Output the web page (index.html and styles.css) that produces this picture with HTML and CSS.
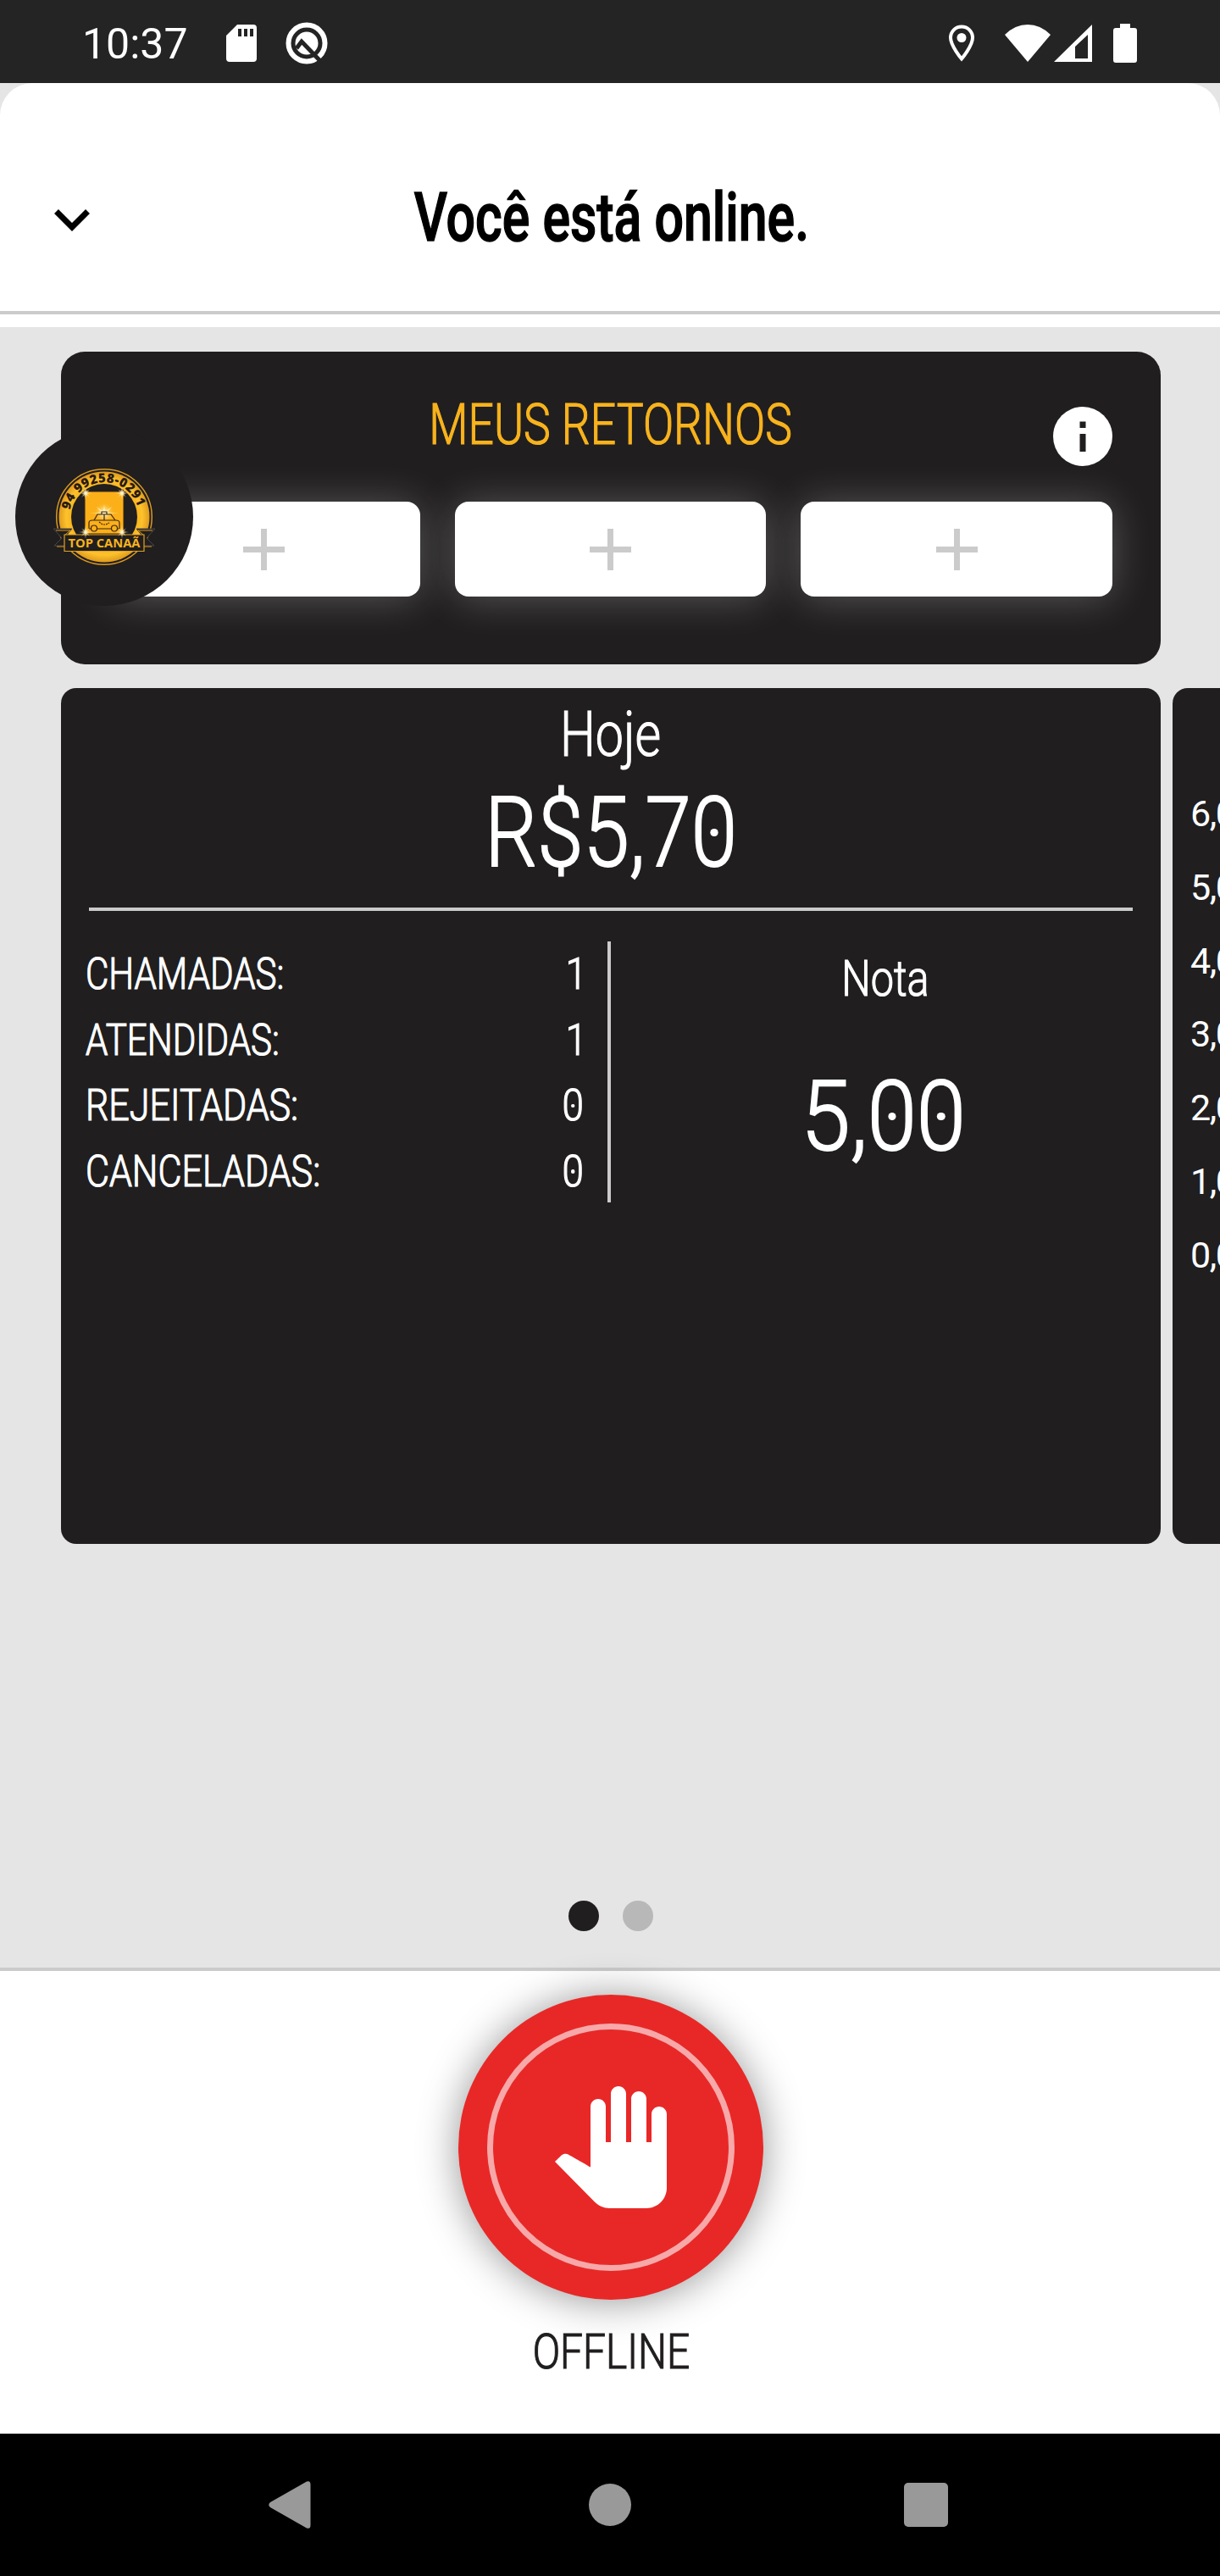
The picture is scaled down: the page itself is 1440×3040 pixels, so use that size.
FILE: index.html
```html
<!DOCTYPE html>
<html lang="pt-BR">
<head>
    <meta charset="UTF-8">
    <meta name="viewport" content="width=device-width, initial-scale=1.0">
    <title>Top Canaã - Motorista</title>
    <link rel="stylesheet" href="styles.css">
</head>
<body>

    <!-- Barra de status -->
    <div class="status-bar">
        <span class="clock">10:37</span>
        <svg class="icon-sd" width="36" height="44" viewBox="0 0 36 44">
            <path fill="#fff" fill-rule="evenodd" d="M13 0h19a4 4 0 0 1 4 4v36a4 4 0 0 1-4 4H4a4 4 0 0 1-4-4V13zM14 5v9h4V5zm7 0v9h4V5zm7 0v9h4V5z"/>
        </svg>
        <svg class="icon-q" width="50" height="50" viewBox="0 0 50 50">
            <circle cx="25" cy="25" r="21.5" fill="none" stroke="#fff" stroke-width="6"/>
            <circle cx="25" cy="25" r="13.5" fill="#fff"/>
            <path d="M13 31l6-8 24 25" fill="none" stroke="#242424" stroke-width="5"/>
        </svg>
        <div class="status-right">
            <svg class="icon-pin" width="32" height="44" viewBox="0 0 32 44">
                <path d="M16 2.5C8.500 2.500 3 8.500 3 15.500 3 25 16 40.500 16 40.500S29 25 29 15.500C29 8.500 23.500 2.500 16 2.500z" fill="none" stroke="#fff" stroke-width="4"/>
                <circle cx="16" cy="15.500" r="5.500" fill="#fff"/>
            </svg>
            <svg class="icon-wifi" width="54" height="44" viewBox="0 0 54 44">
                <path fill="#fff" d="M0 12Q12 0 27 0T54 12L27 44z"/>
            </svg>
            <svg class="icon-signal" width="45" height="44" viewBox="0 0 45 44">
                <path fill="#fff" fill-rule="evenodd" d="M45 0v44H0zM40 12L25 26v14h15z"/>
            </svg>
            <svg class="icon-battery" width="28" height="46" viewBox="0 0 28 46">
                <path fill="#fff" d="M8 0h12v5h5a3 3 0 0 1 3 3v35a3 3 0 0 1-3 3H3a3 3 0 0 1-3-3V8a3 3 0 0 1 3-3h5z"/>
            </svg>
        </div>
    </div>

    <header class="header">
        <svg class="chevron" width="42" height="26" viewBox="0 0 42 26">
            <path d="M2.500 2.500L21 21 39.500 2.500" fill="none" stroke="#000" stroke-width="7"/>
        </svg>
        <h1><span class="title">Você está online.</span></h1>
    </header>

    <main class="content">

        <!-- Retornos -->
        <section class="returns">
            <div class="returns-title"><span>MEUS RETORNOS</span></div>
            <svg class="info" width="70" height="70" viewBox="0 0 70 70">
                <circle cx="35" cy="35" r="35" fill="#fff"/>
                <path fill="#201e1f" d="M31.500 17.500h7V25h-7zM31.500 32h7v21h-7z"/>
            </svg>
            <div class="slots">
                <div class="slot"><i class="plus"></i></div>
                <div class="slot"><i class="plus"></i></div>
                <div class="slot"><i class="plus"></i></div>
            </div>
        </section>

        <!-- Botão flutuante com a logo -->
        <div class="float-logo">
            <svg width="210" height="210" viewBox="0 0 210 210">
                <defs>
                    <radialGradient id="gold">
                        <stop offset="0.65" stop-color="#f9ae17"/>
                        <stop offset="0.84" stop-color="#fcc22c"/>
                        <stop offset="1" stop-color="#e09a1c"/>
                    </radialGradient>
                    <radialGradient id="glow">
                        <stop offset="0" stop-color="#fff"/>
                        <stop offset="0.25" stop-color="#fff3c0" stop-opacity="0.8"/>
                        <stop offset="1" stop-color="#fbb81b" stop-opacity="0"/>
                    </radialGradient>
                    <path id="arc" d="M64.400 97a41.500 41.500 0 0 1 81.200 0"/>
                    <g id="spark">
                        <circle r="5" fill="url(#glow)"/>
                        <path fill="#fff6d5" d="M0-8L.6-.6 8 0 .6.6 0 8-.6.6-8 0-.6-.6zM-5-5L0-.5 5-5 .5 0 5 5 0 .5-5 5-.5 0z"/>
                    </g>
                </defs>
                <circle cx="105" cy="105" r="56.300" fill="#201e1f" stroke="#d99a20" stroke-width="1.500"/>
                <circle cx="105" cy="105" r="53.500" fill="url(#gold)"/>
                <circle cx="105" cy="105" r="39" fill="#201e1f"/>
                <text class="logo-phone"><textPath href="#arc" textLength="109" startOffset="0">94 99258-0291</textPath></text>
                <rect x="82" y="75" width="46" height="50" fill="#fbb01a" stroke="#3a2513"/>
                <!-- Taxi -->
                <circle cx="105" cy="100" r="12" fill="url(#glow)"/>
                <path fill="#fff2b8" d="M105 90l1 9 8-6-6 7 14 1H88l14-1-6-7 8 6z"/>
                <g fill="none" stroke="#3a2513" stroke-width="1.200">
                    <path d="M89.500 119H88q-1 0-1-1v-6q0-3 4-3h28q4 0 4 3v6q0 1-1 1h-1.500M113.500 119h-17M93 109l4-7h16l5 7M102 102v-3h6v3M105 102v7"/>
                    <circle cx="93" cy="118.500" r="3.500"/>
                    <circle cx="117" cy="118.500" r="3.500"/>
                    <path d="M99 111l4 3h4l4-2" stroke-dasharray="2 1"/>
                </g>
                <!-- Faixa -->
                <path fill="#201e1f" stroke="#4b4544" d="M45 119h22l-5 6v14H46l9-9z"/>
                <path fill="#201e1f" stroke="#4b4544" d="M165 119h-22l5 6v14h16l-9-9z"/>
                <path fill="none" stroke="#d99a20" d="M48 121h17l-6 5M162 121h-17l6 5M49 140h9M161 140h-9"/>
                <path fill="#201e1f" stroke="#e3a11d" stroke-width="1.200" d="M58 126h94v19.500H58z"/>
                <text class="logo-name" x="62.500" y="140.500" textLength="85" lengthAdjust="spacingAndGlyphs">TOP CANAÃ</text>
                <use href="#spark" x="83" y="77"/>
                <use href="#spark" x="126" y="77"/>
                <use href="#spark" x="83" y="123"/>
                <use href="#spark" x="126" y="123"/>
            </svg>
        </div>

        <!-- Carrossel -->
        <div class="carousel">
            <section class="card today">
                <div class="today-label"><span>Hoje</span></div>
                <div class="today-value"><span>R$5,7<b class="zero">0</b></span></div>
                <div class="today-body">
                    <ul class="stats">
                        <li><span class="name">CHAMADAS:</span><span class="num one">1</span></li>
                        <li><span class="name">ATENDIDAS:</span><span class="num one">1</span></li>
                        <li><span class="name wide">REJEITADAS:</span><span class="num"><b class="zero">0</b></span></li>
                        <li><span class="name wide">CANCELADAS:</span><span class="num"><b class="zero">0</b></span></li>
                    </ul>
                    <div class="rating">
                        <div class="rating-label"><span>Nota</span></div>
                        <div class="rating-value"><span>5,<b class="zero">0</b><b class="zero">0</b></span></div>
                    </div>
                </div>
            </section>
            <section class="card chart">
                <div>6,00</div>
                <div>5,00</div>
                <div>4,00</div>
                <div>3,00</div>
                <div>2,00</div>
                <div>1,00</div>
                <div>0,00</div>
            </section>
        </div>

        <div class="dots">
            <i class="dot active"></i>
            <i class="dot"></i>
        </div>
    </main>

    <footer class="footer">
        <button class="offline-btn">
            <span class="ring">
                <svg width="144" height="144" viewBox="0 0 24 24">
                    <path fill="#fff" d="M23 5.500V20c0 2.200-1.800 4-4 4h-7.300c-1.080 0-2.100-.43-2.850-1.190L1 14.830s1.260-1.230 1.300-1.250c.22-.19.490-.29.790-.29.220 0 .420.060.600.160.040.010 4.310 2.460 4.310 2.460V4c0-.83.670-1.500 1.500-1.500S11 3.170 11 4v7h1V1.500c0-.83.670-1.500 1.500-1.500S15 .670 15 1.500V11h1V2.500c0-.83.670-1.500 1.500-1.500s1.500.670 1.500 1.500V11h1V5.500c0-.83.670-1.500 1.500-1.500s1.500.670 1.500 1.500z"/>
                </svg>
            </span>
        </button>
        <div class="offline-label"><span>OFFLINE</span></div>
    </footer>

    <!-- Navegação do Android -->
    <nav class="nav-bar">
        <svg width="50" height="56" viewBox="0 0 50 56">
            <path fill="#999" d="M45 .5q4.500-1.500 4.500 3.500v48q0 5-4.500 3.500L2 31q-3.500-3 0-6z"/>
        </svg>
        <i class="nav-home"></i>
        <i class="nav-recent"></i>
    </nav>

</body>
</html>
```
FILE: styles.css
```css
* {
    box-sizing: border-box;
}

body {
    margin: 0;
    width: 1440px;
    height: 3040px;
    display: flex;
    flex-direction: column;
    overflow: hidden;
    background-color: #e5e5e5;
    font-family: Roboto, "Liberation Sans", sans-serif;
    color: #fff;
}

svg {
    display: block;
    flex: none;
}

/* Barra de status */
.status-bar {
    height: 98px;
    padding: 4px 98px 0 97px;
    display: flex;
    align-items: center;
    background-color: #242424;
}

.clock {
    width: 170px;
    font-size: 50px;
    line-height: 60px;
    padding-top: 2px;
}

.icon-q {
    margin-left: 34px;
}

.status-right {
    margin-left: auto;
    display: flex;
    align-items: center;
}

.icon-wifi {
    margin-left: 35px;
}

.icon-signal {
    margin-left: 4px;
}

.icon-battery {
    margin-left: 25px;
}

/* Cabeçalho */
.header {
    height: 288px;
    padding: 17px 64px 0;
    display: grid;
    grid-template-columns: 42px 1fr 42px;
    align-items: center;
    background: linear-gradient(#cbcbcb, #cbcbcb) 0 269px / 100% 4px no-repeat #fff;
    border-radius: 38px 38px 0 0;
}

.chevron {
    margin-top: 18px;
}

h1 {
    margin: 0;
    padding-top: 12px;
    text-align: center;
    color: #000;
    font-size: 80px;
    font-weight: 500;
    line-height: 80px;
    -webkit-text-stroke: 1.500px #000;
}

/* A fonte fica mais estreita com scaleX */
.title,
.returns-title span,
.today-label span,
.today-value span,
.rating-label span,
.rating-value span,
.offline-label span {
    display: inline-block;
    white-space: nowrap;
}

.title {
    transform: translateX(2px) scaleX(0.76);
}

.content {
    position: relative;
    height: 1936px;
    padding: 29px 70px 0 72px;
    flex: none;
}

/* Retornos */
.returns {
    position: relative;
    height: 369px;
    padding: 46px 57px 0 56px;
    background-color: #201e1f;
    border-radius: 28px;
}

.returns-title {
    height: 80px;
    margin-bottom: 51px;
    padding-top: 1px;
    text-align: center;
    color: #f8b31d;
    font-size: 66px;
    font-weight: 300;
    line-height: 80px;
    -webkit-text-stroke: 1.200px #f8b31d;
}

.returns-title span {
    transform: scaleX(0.81);
}

.info {
    position: absolute;
    top: 65px;
    right: 57px;
}

.slots {
    display: grid;
    grid-template-columns: repeat(3, 1fr);
    gap: 41px;
}

.slot {
    height: 112px;
    display: flex;
    align-items: center;
    justify-content: center;
    background-color: #fff;
    border-radius: 16px;
    box-shadow: 0 2px 48px rgba(255, 255, 255, 0.26);
}

.plus {
    width: 49px;
    height: 49px;
    background: linear-gradient(#cbcbcb, #cbcbcb) center / 49px 7px no-repeat,
                linear-gradient(#cbcbcb, #cbcbcb) center / 7px 49px no-repeat;
}

.float-logo {
    position: absolute;
    left: 18px;
    top: 119px;
    width: 210px;
    height: 210px;
    background-color: #201e1f;
    border-radius: 50%;
}

.logo-phone {
    font-family: "Open Sans", sans-serif;
    font-size: 15px;
    font-weight: 800;
    fill: #2a1a12;
}

.logo-name {
    font-family: "Open Sans", sans-serif;
    font-size: 15px;
    font-weight: 700;
    fill: #f8b31d;
}

/* Carrossel */
.carousel {
    width: 1368px;
    margin-top: 28px;
    display: flex;
    gap: 14px;
    overflow: hidden;
}

.card {
    height: 1010px;
    flex: none;
    background-color: #201e1f;
    border-radius: 18px;
}

.today {
    width: 1298px;
    padding: 14px 33px 0;
    font-weight: 300;
    -webkit-text-stroke: 1.200px #fff;
}

.today-label {
    height: 82px;
    text-align: center;
    font-size: 74px;
    line-height: 82px;
}

.today-label span {
    transform: scaleX(0.8);
}

.today-value {
    height: 167px;
    padding-top: 5px;
    border-bottom: 4px solid #cbcbcb;
    text-align: center;
    font-size: 115px;
    line-height: 140px;
    -webkit-text-stroke-width: 2px;
}

.today-value span {
    transform: scaleX(0.85);
}

.today-body {
    height: 308px;
    margin-top: 36px;
    display: flex;
}

.stats {
    width: 616px;
    margin: 0;
    padding: 0 28px 0 0;
    list-style: none;
    border-right: 4px solid #cbcbcb;
}

.stats li {
    height: 77.700px;
    display: flex;
    justify-content: space-between;
    font-size: 52px;
    line-height: 78px;
}

.stats .name {
    transform: scaleX(0.81);
    transform-origin: left;
    margin-left: -4px;
}

.stats .name.wide {
    transform: scaleX(0.828);
}

.stats .num {
    transform: scaleX(0.88);
    transform-origin: right;
}

.stats .one {
    margin-right: -4px;
}

/* Zero com ponto no meio */
.zero {
    position: relative;
    font-weight: inherit;
}

.zero::after {
    content: "";
    position: absolute;
    left: 50%;
    top: 50%;
    width: 0.09em;
    height: 0.08em;
    margin: -0.04em 0 0 -0.045em;
    background-color: #fff;
    border-radius: 50%;
}

.rating {
    flex: 1;
    padding: 8px 0 0 31px;
    text-align: center;
}

.rating-label {
    height: 72px;
    font-size: 60px;
    line-height: 72px;
}

.rating-label span {
    transform: scaleX(0.81);
}

.rating-value {
    margin-top: 57px;
    font-size: 115px;
    line-height: 140px;
    -webkit-text-stroke-width: 2px;
}

.rating-value span {
    transform: translateX(-2px) scaleX(0.91);
}

.chart {
    width: 1298px;
    padding: 105px 21px 0;
    font-size: 43px;
    line-height: 86.800px;
    letter-spacing: -1.500px;
}

.dots {
    position: absolute;
    left: 671px;
    bottom: 43px;
    display: flex;
    gap: 28px;
}

.dot {
    width: 36px;
    height: 36px;
    background-color: #b8b8b8;
    border-radius: 50%;
}

.dot.active {
    background-color: #201e1f;
}

/* Rodapé */
.footer {
    position: relative;
    height: 550px;
    padding: 28px 0 0 2px;
    display: flex;
    flex-direction: column;
    align-items: center;
    border-top: 4px solid #cbcbcb;
    background-color: #fff;
}

.offline-btn {
    width: 360px;
    height: 360px;
    padding: 0;
    display: flex;
    align-items: center;
    justify-content: center;
    border: none;
    border-radius: 50%;
    background-color: #e82827;
    box-shadow: 0 2px 48px rgba(0, 0, 0, 0.42);
}

.ring {
    width: 292px;
    height: 292px;
    display: flex;
    align-items: center;
    justify-content: center;
    border: 7px solid #f7a8a9;
    border-radius: 50%;
}

.offline-label {
    margin-top: 26px;
    color: #201e1f;
    font-size: 57px;
    font-weight: 300;
    line-height: 72px;
    -webkit-text-stroke: 1.200px #201e1f;
}

.offline-label span {
    transform: scaleX(0.84);
}

/* Navegação */
.nav-bar {
    height: 168px;
    padding: 0 321px 0 317px;
    display: flex;
    align-items: center;
    justify-content: space-between;
    background-color: #000;
}

.nav-home {
    width: 50px;
    height: 50px;
    margin-left: 6px;
    border-radius: 50%;
    background-color: #999;
}

.nav-recent {
    width: 52px;
    height: 52px;
    border-radius: 5px;
    background-color: #999;
}
```
